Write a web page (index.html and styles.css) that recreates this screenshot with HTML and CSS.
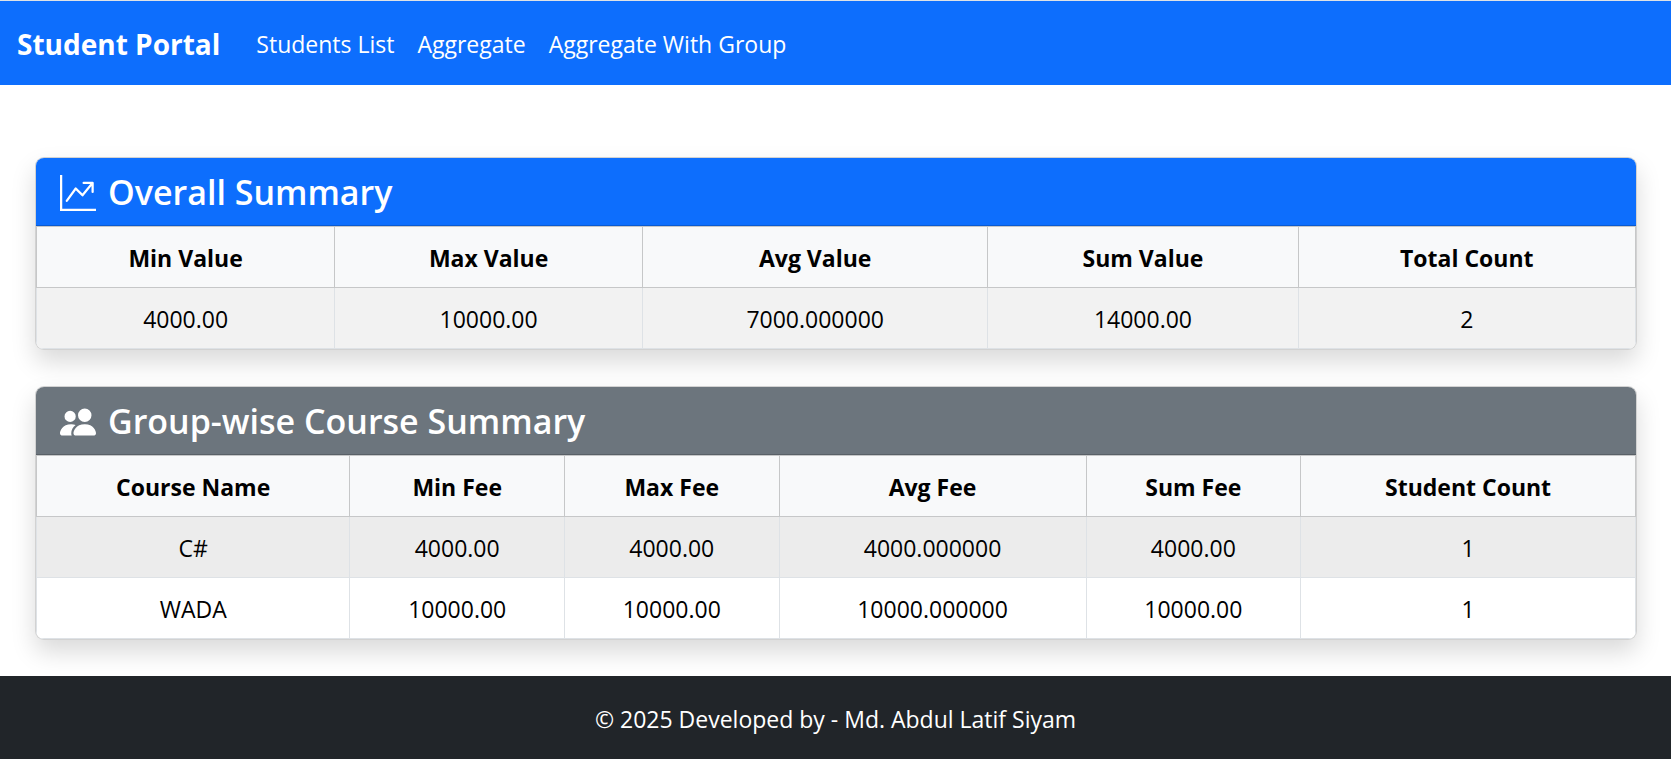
FILE: index.html
```html
<!DOCTYPE html>
<html lang="en">
<head>
<meta charset="utf-8">
<meta name="viewport" content="width=device-width, initial-scale=1">
<title>Student Portal</title>
<link rel="stylesheet" href="styles.css">
</head>
<body>
<nav class="navbar">
  <a class="navbar-brand" href="#">Student Portal</a>
  <ul class="navbar-nav">
    <li><a class="nav-link" href="#">Students List</a></li>
    <li><a class="nav-link" href="#">Aggregate</a></li>
    <li><a class="nav-link" href="#">Aggregate With Group</a></li>
  </ul>
</nav>
<main class="content">
  <section class="card">
    <header class="card-header card-header-primary">
      <svg class="icon" viewBox="0 0 16 16" fill="currentColor" aria-hidden="true"><path fill-rule="evenodd" d="M0 0h1v15h15v1H0zm10 3.5a.5.5 0 0 1 .5-.5h4a.5.5 0 0 1 .5.5v4a.5.5 0 0 1-1 0V4.900l-3.613 4.417a.5.5 0 0 1-.74.037L7.060 6.767l-3.656 5.027a.5.5 0 0 1-.808-.588l4-5.500a.5.5 0 0 1 .758-.060l2.609 2.610L13.445 4H10.500a.5.5 0 0 1-.5-.5"/></svg>
      <h4 class="card-title">Overall Summary</h4>
    </header>
    <table class="table table-overall">
      <colgroup><col class="w-min"><col class="w-max"><col class="w-avg"><col class="w-sum"><col class="w-count"></colgroup>
      <thead>
        <tr><th scope="col">Min Value</th><th scope="col">Max Value</th><th scope="col">Avg Value</th><th scope="col">Sum Value</th><th scope="col">Total Count</th></tr>
      </thead>
      <tbody>
        <tr><td>4000.00</td><td>10000.00</td><td>7000.000000</td><td>14000.00</td><td>2</td></tr>
      </tbody>
    </table>
  </section>
  <section class="card">
    <header class="card-header card-header-secondary">
      <svg class="icon" viewBox="0 0 16 16" fill="currentColor" aria-hidden="true"><path d="M7 14s-1 0-1-1 1-4 5-4 5 3 5 4-1 1-1 1zm4-6a3 3 0 1 0 0-6 3 3 0 0 0 0 6m-5.784 6A2.240 2.240 0 0 1 5 13c0-1.355.68-2.750 1.936-3.720A6.300 6.300 0 0 0 5 9c-4 0-5 3-5 4s1 1 1 1zM4.500 8a2.500 2.500 0 1 0 0-5 2.500 2.500 0 0 0 0 5"/></svg>
      <h4 class="card-title">Group-wise Course Summary</h4>
    </header>
    <table class="table table-group">
      <colgroup><col class="w-name"><col class="w-min"><col class="w-max"><col class="w-avg"><col class="w-sum"><col class="w-count"></colgroup>
      <thead>
        <tr><th scope="col">Course Name</th><th scope="col">Min Fee</th><th scope="col">Max Fee</th><th scope="col">Avg Fee</th><th scope="col">Sum Fee</th><th scope="col">Student Count</th></tr>
      </thead>
      <tbody>
        <tr class="active"><td>C#</td><td>4000.00</td><td>4000.00</td><td>4000.000000</td><td>4000.00</td><td>1</td></tr>
        <tr><td>WADA</td><td>10000.00</td><td>10000.00</td><td>10000.000000</td><td>10000.00</td><td>1</td></tr>
      </tbody>
    </table>
  </section>
</main>
<footer class="footer">
  <p class="footer-text">© 2025 Developed by - Md. Abdul Latif Siyam</p>
</footer>
</body>
</html>
```
FILE: styles.css
```css
*, *::before, *::after {
  box-sizing: border-box;
}

body {
  margin: 0;
  min-height: 100vh;
  display: flex;
  flex-direction: column;
  font-family: "Segoe UI", "Open Sans", "Noto Sans", sans-serif;
  font-size: 23px;
  line-height: 36px;
  color: #212529;
  background: #fff;
}

.navbar {
  display: flex;
  align-items: center;
  gap: 36px;
  padding: 19px 17px 17px;
  border-top: 1px solid #dee2e6;
  background: #0d6efd;
}

.navbar-brand {
  font-size: 28px;
  font-weight: 700;
  line-height: 48px;
  color: #fff;
  text-decoration: none;
}

.navbar-nav {
  display: flex;
  gap: 23px;
  margin: 0;
  padding: 0;
  list-style: none;
}

.nav-link {
  color: #fff;
  text-decoration: none;
}

.content {
  display: flex;
  flex-direction: column;
  gap: 36px;
  padding: 72px 34px 36px 35px;
}

.card {
  overflow: hidden;
  border: 1px solid rgba(0, 0, 0, 0.176);
  border-radius: 9px;
  background: #fff;
  box-shadow: 0 12px 24px rgba(0, 0, 0, 0.15);
}

.card-header {
  display: flex;
  align-items: center;
  gap: 12px;
  padding: 13px 24px 11px;
  border-bottom: 1px solid rgba(0, 0, 0, 0.176);
  color: #fff;
}

.card-header-primary {
  background: #0d6efd;
}

.card-header-secondary {
  background: #6c757d;
}

.icon {
  flex: none;
  width: 36px;
  height: 36px;
}

.card-title {
  margin: 0;
  font-size: 34px;
  font-weight: 600;
  line-height: 43px;
}

.table {
  width: 100%;
  table-layout: fixed;
  border-collapse: collapse;
  text-align: center;
  color: #000;
}

.table th,
.table td {
  padding: 13px 12px 11px;
  border: 1px solid #dee2e6;
}

.table th {
  border-color: #c6c7c8;
  font-weight: 700;
  background: #f8f9fa;
}

.table-overall td {
  background: #f2f2f2;
}

.table-group .active td {
  background: #ececec;
}

.table-overall .w-min { width: 18.65%; }
.table-overall .w-max { width: 19.25%; }
.table-overall .w-avg { width: 21.6%; }
.table-overall .w-sum { width: 19.4%; }
.table-overall .w-count { width: 21.1%; }

.table-group .w-name { width: 19.6%; }
.table-group .w-min,
.table-group .w-max,
.table-group .w-sum { width: 13.42%; }
.table-group .w-avg { width: 19.2%; }
.table-group .w-count { width: 20.94%; }

.footer {
  margin-top: auto;
  padding: 25px 24px 23px;
  background: #212529;
  color: #fff;
  text-align: center;
}

.footer-text {
  margin: 0;
}
```
